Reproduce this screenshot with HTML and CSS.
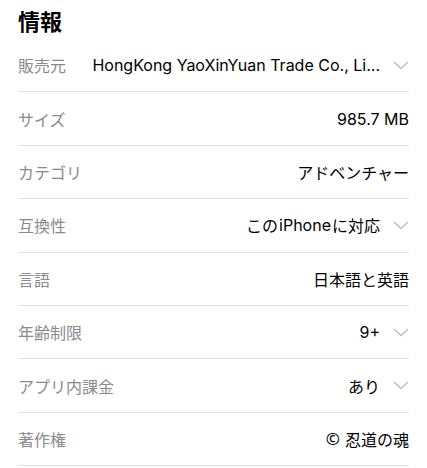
FILE: index.html
```html
<!DOCTYPE html>
<html lang="ja">
<head>
    <meta charset="UTF-8">
    <meta name="viewport" content="width=device-width, initial-scale=1.0">
    <title>情報</title>
    <link rel="stylesheet" href="styles.css">
</head>
<body>
    <div class="info">
        <h2 class="info-title">情報</h2>
        <div class="info-row">
            <span class="label">販売元</span>
            <span class="value">HongKong YaoXinYuan Trade Co., Li...<svg class="chevron" viewBox="0 0 16 9"><polyline points="1,1 8,7.5 15,1"/></svg></span>
        </div>
        <div class="info-row">
            <span class="label">サイズ</span>
            <span class="value">985.7 MB</span>
        </div>
        <div class="info-row">
            <span class="label">カテゴリ</span>
            <span class="value">アドベンチャー</span>
        </div>
        <div class="info-row">
            <span class="label">互換性</span>
            <span class="value">この<span class="inline">iPhone</span>に対応<svg class="chevron" viewBox="0 0 16 9"><polyline points="1,1 8,7.5 15,1"/></svg></span>
        </div>
        <div class="info-row">
            <span class="label">言語</span>
            <span class="value">日本語と英語</span>
        </div>
        <div class="info-row">
            <span class="label">年齢制限</span>
            <span class="value">9+<svg class="chevron" viewBox="0 0 16 9"><polyline points="1,1 8,7.5 15,1"/></svg></span>
        </div>
        <div class="info-row">
            <span class="label">アプリ内課金</span>
            <span class="value">あり<svg class="chevron" viewBox="0 0 16 9"><polyline points="1,1 8,7.5 15,1"/></svg></span>
        </div>
        <div class="info-row">
            <span class="label">著作権</span>
            <span class="value"><span class="copy">©</span>忍道の魂</span>
        </div>
    </div>
</body>
</html>
```

FILE: styles.css
```css
body {
    margin: 0;
    background-color: #fff;
    font-family: Inter, "Noto Sans CJK JP", sans-serif;
    color: #000;
}
.info {
    padding: 0 18px;
}
.info-title {
    margin: 0;
    height: 39px;
    padding-top: 7px;
    box-sizing: border-box;
    font-size: 22px;
    line-height: 30px;
    font-weight: bold;
}
.info-row {
    display: flex;
    align-items: center;
    justify-content: space-between;
    height: 53.4px;
    box-sizing: border-box;
    border-bottom: 1px solid #e2e2e4;
    font-size: 16px;
}
.label {
    color: #8a8a8e;
    white-space: nowrap;
}
.value {
    display: flex;
    align-items: center;
    white-space: nowrap;
}
.inline {
    margin: 0 1px;
}
.copy {
    font-family: "Noto Sans", sans-serif;
    font-size: 17px;
    margin-right: 5px;
}
.chevron {
    width: 16px;
    height: 9px;
    margin-left: 13px;
    fill: none;
    stroke: #bdbdc2;
    stroke-width: 1.4;
}
```
